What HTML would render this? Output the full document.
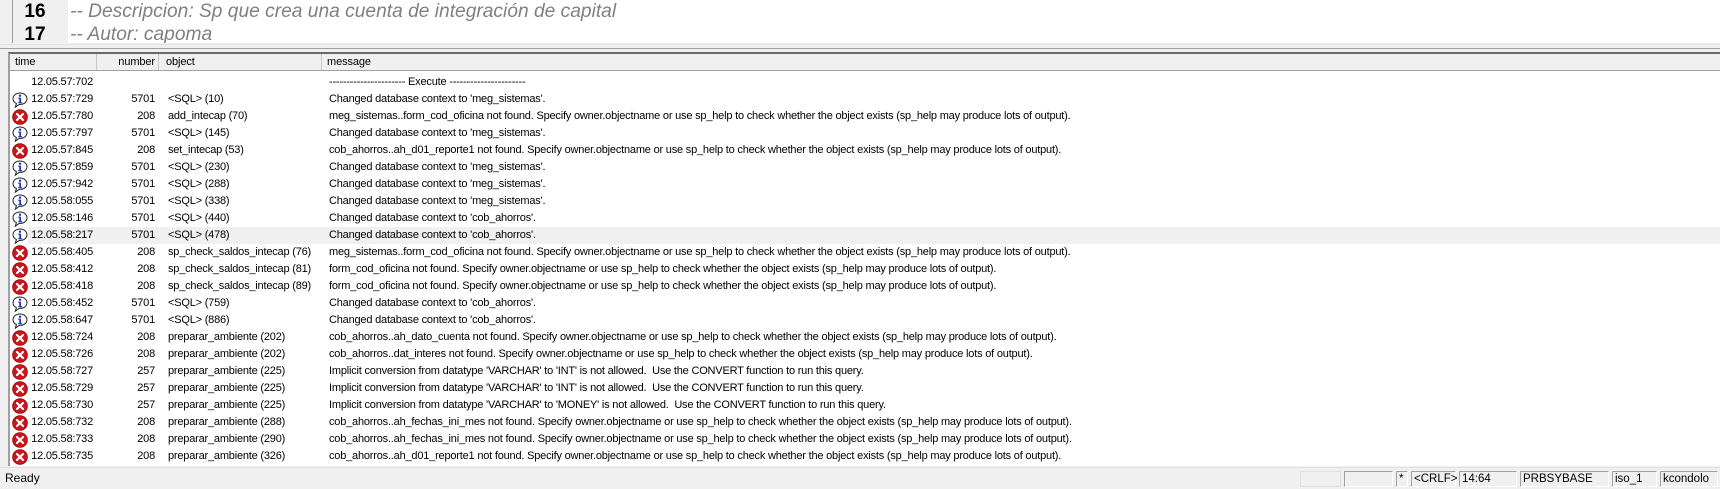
<!DOCTYPE html>
<html><head><meta charset="utf-8"><style>
body{margin:0;width:1720px;height:488px;background:#f0f0f0;position:relative;overflow:hidden;font-family:"Liberation Sans",Tahoma,sans-serif;}
.ed{position:absolute;left:0;top:0;width:1720px;height:43px;background:#fff;overflow:hidden}
.lstrip{position:absolute;left:0;top:0;width:12px;height:43px;background:#f0f0f0;border-right:1px solid #a0a0a0}
.gut{position:absolute;left:13px;top:0;width:55px;height:43px;background:#f0f0f0}
.ln{position:absolute;left:13px;width:44px;text-align:center;font-weight:bold;font-size:19px;color:#000}
.code{position:absolute;left:70px;font-style:italic;font-size:19.2px;color:#808080;white-space:nowrap}
.sep1{position:absolute;left:0;top:44px;width:1720px;height:1px;background:#e3e3e3}
.sep2{position:absolute;left:0;top:48px;width:1720px;height:1px;background:#a0a0a0}
.list{position:absolute;left:8px;top:52px;width:1712px;height:414px;background:#fff;border-top:2px solid #696969;border-left:2px solid #a0a0a0;box-sizing:border-box;overflow:hidden}
.hdr{position:absolute;left:0;top:0;width:100%;height:16px;background:#f0f0f0;border-bottom:1px solid #a0a0a0;font-size:11px;line-height:16px;letter-spacing:-0.1px}
.hdr span{position:absolute;top:0}
.vl{position:absolute;top:0;width:1px;height:16px;background:#c8c8c8}
.row{position:absolute;left:0;width:100%;height:17px;font-size:11px;line-height:17px;color:#000;white-space:nowrap;letter-spacing:-0.2px}
.row span{position:absolute;top:0}
.t{left:18px;width:65px;text-align:right}
.n{left:90px;width:55px;text-align:right}
.o{left:158px}
.m{left:319px}
.ic{position:absolute;left:2px;top:0}
.hl{background:#f0f0f0}
.sb{position:absolute;left:0;top:467px;width:1720px;height:21px;background:#f0f0f0;border-top:1px solid #e0e0e0}
.p{position:absolute;top:3px;height:16px;border:1px solid #a0a0a0;border-bottom-color:#fff;border-right-color:#fff;box-sizing:border-box;font-size:11.5px;line-height:15px;padding-left:2px}
</style></head><body>
<div class="ed">
<div class="lstrip"></div><div class="gut"></div>
<div class="ln" style="top:1px">16</div>
<div class="code" style="top:1px">-- Descripcion: Sp que crea una cuenta de integración de capital</div>
<div class="ln" style="top:24px">17</div>
<div class="code" style="top:24px">-- Autor: capoma</div>
</div>
<div class="sep1"></div><div class="sep2"></div>
<div class="list">
<div class="hdr"><span style="left:5px">time</span><div class="vl" style="left:86px"></div><span style="left:90px;width:55px;text-align:right">number</span><div class="vl" style="left:148px"></div><span style="left:156px">object</span><div class="vl" style="left:311px"></div><span style="left:317px">message</span></div>
<div id="rows"></div>
</div>
<svg width="0" height="0" style="position:absolute">
<defs>
<symbol id="inf" viewBox="0 0 16 16"><path d="M8 1C4 1 1 3.5 1 6.8c0 2.2 1.4 3.9 3.4 4.8L3.3 15.2l3.9-2.8c.3 0 .5 0 .8 0 4 0 7-2.4 7-5.6S12 1 8 1z" fill="#fff" stroke="#222" stroke-width="1"/><circle cx="8" cy="3.7" r="1.2" fill="#1633c8"/><path d="M6.2 5.6h2.8v4.5h1.1v1.2H6.2v-1.2h1.1V6.8H6.2z" fill="#1633c8"/></symbol>
<symbol id="err" viewBox="0 0 16 16"><circle cx="8" cy="8" r="7.4" fill="#d0141a" stroke="#8a0a0a" stroke-width=".8"/><path d="M5 5l6 6M11 5l-6 6" stroke="#fff" stroke-width="2.2" stroke-linecap="round"/></symbol>
</defs></svg>
<div class="sb">
<div class="p" style="left:3px;top:3px;width:1218px;border:none;font-size:12px">Ready</div>
<div class="p" style="left:1300px;width:41px;border-color:#e0e0e0"></div>
<div class="p" style="left:1344px;width:49px"></div>
<div class="p" style="left:1396px;width:12px">*</div>
<div class="p" style="left:1411px;width:45px">&lt;CRLF&gt;</div>
<div class="p" style="left:1459px;width:58px">14:64</div>
<div class="p" style="left:1520px;width:89px">PRBSYBASE</div>
<div class="p" style="left:1612px;width:45px">iso_1</div>
<div class="p" style="left:1660px;width:58px">kcondolo</div>
</div>
<script>
var E="not found. Specify owner.objectname or use sp_help to check whether the object exists (sp_help may produce lots of output).";
var C="Changed database context to ";
var V=function(a){return "Implicit conversion from datatype 'VARCHAR' to '"+a+"' is not allowed.\u00a0 Use the CONVERT function to run this query.";};
var d=[
["","12.05.57:702","","","---------------------- Execute ----------------------"],
["i","12.05.57:729","5701","<SQL> (10)",C+"'meg_sistemas'."],
["e","12.05.57:780","208","add_intecap (70)","meg_sistemas..form_cod_oficina "+E],
["i","12.05.57:797","5701","<SQL> (145)",C+"'meg_sistemas'."],
["e","12.05.57:845","208","set_intecap (53)","cob_ahorros..ah_d01_reporte1 "+E],
["i","12.05.57:859","5701","<SQL> (230)",C+"'meg_sistemas'."],
["i","12.05.57:942","5701","<SQL> (288)",C+"'meg_sistemas'."],
["i","12.05.58:055","5701","<SQL> (338)",C+"'meg_sistemas'."],
["i","12.05.58:146","5701","<SQL> (440)",C+"'cob_ahorros'."],
["i","12.05.58:217","5701","<SQL> (478)",C+"'cob_ahorros'."],
["e","12.05.58:405","208","sp_check_saldos_intecap (76)","meg_sistemas..form_cod_oficina "+E],
["e","12.05.58:412","208","sp_check_saldos_intecap (81)","form_cod_oficina "+E],
["e","12.05.58:418","208","sp_check_saldos_intecap (89)","form_cod_oficina "+E],
["i","12.05.58:452","5701","<SQL> (759)",C+"'cob_ahorros'."],
["i","12.05.58:647","5701","<SQL> (886)",C+"'cob_ahorros'."],
["e","12.05.58:724","208","preparar_ambiente (202)","cob_ahorros..ah_dato_cuenta "+E],
["e","12.05.58:726","208","preparar_ambiente (202)","cob_ahorros..dat_interes "+E],
["e","12.05.58:727","257","preparar_ambiente (225)",V("INT")],
["e","12.05.58:729","257","preparar_ambiente (225)",V("INT")],
["e","12.05.58:730","257","preparar_ambiente (225)",V("MONEY")],
["e","12.05.58:732","208","preparar_ambiente (288)","cob_ahorros..ah_fechas_ini_mes "+E],
["e","12.05.58:733","208","preparar_ambiente (290)","cob_ahorros..ah_fechas_ini_mes "+E],
["e","12.05.58:735","208","preparar_ambiente (326)","cob_ahorros..ah_d01_reporte1 "+E],
["e","","","",""]];
function esc(s){return s.replace(/&/g,"&amp;").replace(/</g,"&lt;").replace(/>/g,"&gt;");}
var h="";
d.forEach(function(r,i){
var ic=r[0]?'<svg class="ic" width="16" height="16" style="top:0.5px"><use href="#'+(r[0]=="i"?"inf":"err")+'"/></svg>':"";
h+='<div class="row'+(i==9?' hl':'')+'" style="top:'+(20+i*17)+'px">'+(i==9?'<div style="position:absolute;left:0;top:0;width:18px;height:17px;background:#fff"></div>':'')+ic+'<span class="t">'+r[1]+'</span><span class="n">'+r[2]+'</span><span class="o">'+esc(r[3])+'</span><span class="m">'+esc(r[4])+'</span></div>';
});
document.getElementById("rows").innerHTML=h;
</script>
</body></html>
